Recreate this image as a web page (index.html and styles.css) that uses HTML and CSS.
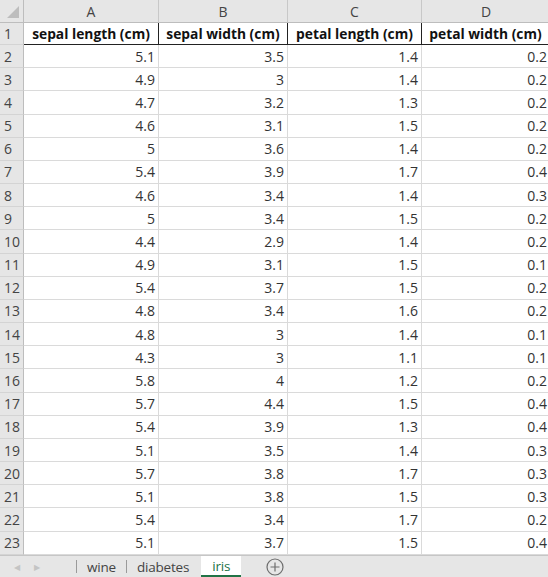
FILE: index.html
```html
<!DOCTYPE html>
<html>
<head>
<meta charset="utf-8">
<link rel="stylesheet" href="styles.css">
</head>
<body>
<div class="sheet">
  <div class="grid" id="grid">
    <div class="corner"><svg width="23" height="22" viewBox="0 0 23 22"><polygon points="19,6 19,18 7,18" fill="#bdbdbd"/></svg></div>
    <div class="colhead">A</div>
    <div class="colhead">B</div>
    <div class="colhead">C</div>
    <div class="colhead last">D</div>

    <div class="rowhead">1</div>
    <div class="cell head">sepal length (cm)</div>
    <div class="cell head">sepal width (cm)</div>
    <div class="cell head">petal length (cm)</div>
    <div class="cell head last">petal width (cm)</div>

    <div class="rowhead">2</div><div class="cell">5.1</div><div class="cell">3.5</div><div class="cell">1.4</div><div class="cell last">0.2</div>
    <div class="rowhead">3</div><div class="cell">4.9</div><div class="cell">3</div><div class="cell">1.4</div><div class="cell last">0.2</div>
    <div class="rowhead">4</div><div class="cell">4.7</div><div class="cell">3.2</div><div class="cell">1.3</div><div class="cell last">0.2</div>
    <div class="rowhead">5</div><div class="cell">4.6</div><div class="cell">3.1</div><div class="cell">1.5</div><div class="cell last">0.2</div>
    <div class="rowhead">6</div><div class="cell">5</div><div class="cell">3.6</div><div class="cell">1.4</div><div class="cell last">0.2</div>
    <div class="rowhead">7</div><div class="cell">5.4</div><div class="cell">3.9</div><div class="cell">1.7</div><div class="cell last">0.4</div>
    <div class="rowhead">8</div><div class="cell">4.6</div><div class="cell">3.4</div><div class="cell">1.4</div><div class="cell last">0.3</div>
    <div class="rowhead">9</div><div class="cell">5</div><div class="cell">3.4</div><div class="cell">1.5</div><div class="cell last">0.2</div>
    <div class="rowhead">10</div><div class="cell">4.4</div><div class="cell">2.9</div><div class="cell">1.4</div><div class="cell last">0.2</div>
    <div class="rowhead">11</div><div class="cell">4.9</div><div class="cell">3.1</div><div class="cell">1.5</div><div class="cell last">0.1</div>
    <div class="rowhead">12</div><div class="cell">5.4</div><div class="cell">3.7</div><div class="cell">1.5</div><div class="cell last">0.2</div>
    <div class="rowhead">13</div><div class="cell">4.8</div><div class="cell">3.4</div><div class="cell">1.6</div><div class="cell last">0.2</div>
    <div class="rowhead">14</div><div class="cell">4.8</div><div class="cell">3</div><div class="cell">1.4</div><div class="cell last">0.1</div>
    <div class="rowhead">15</div><div class="cell">4.3</div><div class="cell">3</div><div class="cell">1.1</div><div class="cell last">0.1</div>
    <div class="rowhead">16</div><div class="cell">5.8</div><div class="cell">4</div><div class="cell">1.2</div><div class="cell last">0.2</div>
    <div class="rowhead">17</div><div class="cell">5.7</div><div class="cell">4.4</div><div class="cell">1.5</div><div class="cell last">0.4</div>
    <div class="rowhead">18</div><div class="cell">5.4</div><div class="cell">3.9</div><div class="cell">1.3</div><div class="cell last">0.4</div>
    <div class="rowhead">19</div><div class="cell">5.1</div><div class="cell">3.5</div><div class="cell">1.4</div><div class="cell last">0.3</div>
    <div class="rowhead">20</div><div class="cell">5.7</div><div class="cell">3.8</div><div class="cell">1.7</div><div class="cell last">0.3</div>
    <div class="rowhead">21</div><div class="cell">5.1</div><div class="cell">3.8</div><div class="cell">1.5</div><div class="cell last">0.3</div>
    <div class="rowhead">22</div><div class="cell">5.4</div><div class="cell">3.4</div><div class="cell">1.7</div><div class="cell last">0.2</div>
    <div class="rowhead">23</div><div class="cell">5.1</div><div class="cell">3.7</div><div class="cell">1.5</div><div class="cell last">0.4</div>
  </div>
  <div class="tabbar">
    <div class="nav">
      <span class="arrow">&#9664;</span>
      <span class="arrow">&#9654;</span>
    </div>
    <div class="sep"></div>
    <div class="tab">wine</div>
    <div class="sep"></div>
    <div class="tab">diabetes</div>
    <div class="tab active">iris</div>
    <div class="add"><svg width="18" height="18" viewBox="0 0 18 18"><circle cx="9" cy="9" r="8" fill="none" stroke="#6d6d6d" stroke-width="1.2"/><path d="M9 4.5 V13.5 M4.5 9 H13.5" stroke="#6d6d6d" stroke-width="1.2"/></svg></div>
  </div>
</div>
</body>
</html>
```

FILE: styles.css
```css
html, body {
  margin: 0;
  padding: 0;
  width: 548px;
  height: 577px;
  overflow: hidden;
  background: #ffffff;
}

.sheet {
  width: 548px;
  height: 577px;
  display: flex;
  flex-direction: column;
  font-family: "Open Sans", "Noto Sans", sans-serif;
}

.grid {
  display: grid;
  grid-template-columns: 24px 135px 129px 134px 128px;
  grid-template-rows: 23px 22px repeat(22, 23.18px);
  height: 555px;
  overflow: hidden;
}

.corner {
  background: #e6e6e6;
  border-right: 1px solid #bdbdbd;
  border-bottom: 1px solid #bdbdbd;
  box-sizing: border-box;
}
.corner svg { display: block; }

.colhead {
  background: #e6e6e6;
  color: #444;
  font-size: 14px;
  display: flex;
  align-items: center;
  justify-content: center;
  border-right: 1px solid #c8c8c8;
  border-bottom: 1px solid #bdbdbd;
  box-sizing: border-box;
}

.rowhead {
  background: #e6e6e6;
  color: #444;
  font-size: 14px;
  display: flex;
  align-items: center;
  padding-left: 4px;
  border-right: 1px solid #bdbdbd;
  border-bottom: 1px solid #d4d4d4;
  box-sizing: border-box;
}

.cell {
  color: #333;
  font-size: 14px;
  display: flex;
  align-items: center;
  justify-content: flex-end;
  padding-right: 3px;
  border-right: 1px solid #dadada;
  border-bottom: 1px solid #dadada;
  box-sizing: border-box;
  white-space: nowrap;
  overflow: hidden;
}

.cell.head {
  font-weight: bold;
  color: #111;
  font-size: 13.8px;
  justify-content: center;
  padding-right: 0;
  border-right: 1px solid #222;
  border-bottom: 1px solid #222;
}

.last { border-right: none; }

.tabbar {
  flex: 1;
  background: #e6e6e6;
  border-top: 1px solid #c6c6c6;
  display: flex;
  align-items: stretch;
  font-size: 13.5px;
  letter-spacing: -0.2px;
  color: #444;
}

.nav {
  width: 76px;
  display: flex;
  align-items: center;
  gap: 14px;
  padding-left: 14px;
  box-sizing: border-box;
  font-size: 8px;
  color: #c4c4c4;
}

.sep {
  width: 1px;
  background: #9a9a9a;
  margin: 4px 0;
}

.tab {
  padding: 0 10px;
  display: flex;
  align-items: center;
}

.tab.active {
  background: #ffffff;
  color: #217346;
  border-bottom: 2px solid #217346;
  padding: 0 11px;
  margin-left: 2px;
}

.add {
  display: flex;
  align-items: center;
  margin-left: 25px;
}
.add svg { display: block; }
```
